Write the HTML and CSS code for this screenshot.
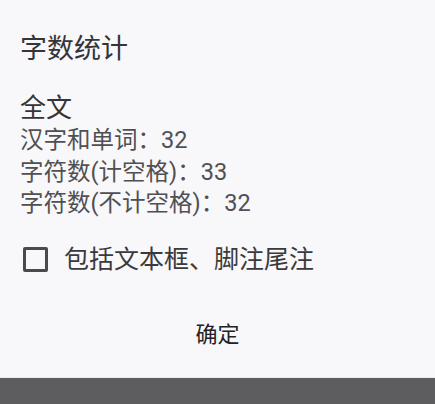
FILE: index.html
```html
<!DOCTYPE html>
<html lang="zh-CN">
<head>
  <meta charset="UTF-8" />
  <meta name="viewport" content="width=device-width, initial-scale=1.0" />
  <title>字数统计</title>
  <link rel="stylesheet" href="styles.css">
</head>
<body>

  <div class="dialog">
    <h1 class="title">字数统计</h1>

    <section class="stats">
      <h2>全文</h2>
      <p>汉字和单词：32</p>
      <p>字符数(计空格)：33</p>
      <p>字符数(不计空格)：32</p>
    </section>

    <label class="option">
      <span class="box"></span>
      <span>包括文本框、脚注尾注</span>
    </label>

    <div class="actions">
      <button class="ok">确定</button>
    </div>
  </div>

  <div class="navbar"></div>

</body>
</html>
```

FILE: styles.css
```css
:root {
  --bg: #f8f7fa;
  --text-dark: #2e2e30;
  --text-mid: #505052;
  --bar: #5d5c5f;
}
* { box-sizing: border-box; }
body {
  margin: 0;
  height: 404px;
  display: flex;
  flex-direction: column;
  background: var(--bg);
  font-family: Roboto, "Noto Sans CJK SC", sans-serif;
  color: var(--text-dark);
  overflow: hidden;
}
.dialog {
  flex: 1;
  padding: 36px 20px 0;
  border-bottom: 1px solid #eceaee;
}
.title {
  margin: 0;
  font-size: 27px;
  line-height: 27px;
  font-weight: normal;
  color: #353537;
}
.stats {
  margin-top: 32px;
}
.stats h2 {
  margin: 0 0 4px;
  font-size: 26px;
  line-height: 26px;
  font-weight: normal;
  color: #353537;
}
.stats p {
  margin: 0;
  font-size: 23.5px;
  line-height: 31.5px;
  color: var(--text-mid);
}
.option {
  display: flex;
  align-items: center;
  gap: 16px;
  margin-top: 26px;
  padding-left: 3px;
  font-size: 25px;
  line-height: 28px;
  color: #3a3a3c;
}
.box {
  width: 25px;
  height: 25px;
  border: 3px solid #4a4a4c;
  border-radius: 2px;
}
.actions {
  display: flex;
  justify-content: center;
  margin-top: 49px;
}
.ok {
  border: none;
  background: none;
  padding: 0;
  font-family: inherit;
  font-size: 22px;
  line-height: 24px;
  color: #222224;
}
.navbar {
  height: 26px;
  background: var(--bar);
}
```
